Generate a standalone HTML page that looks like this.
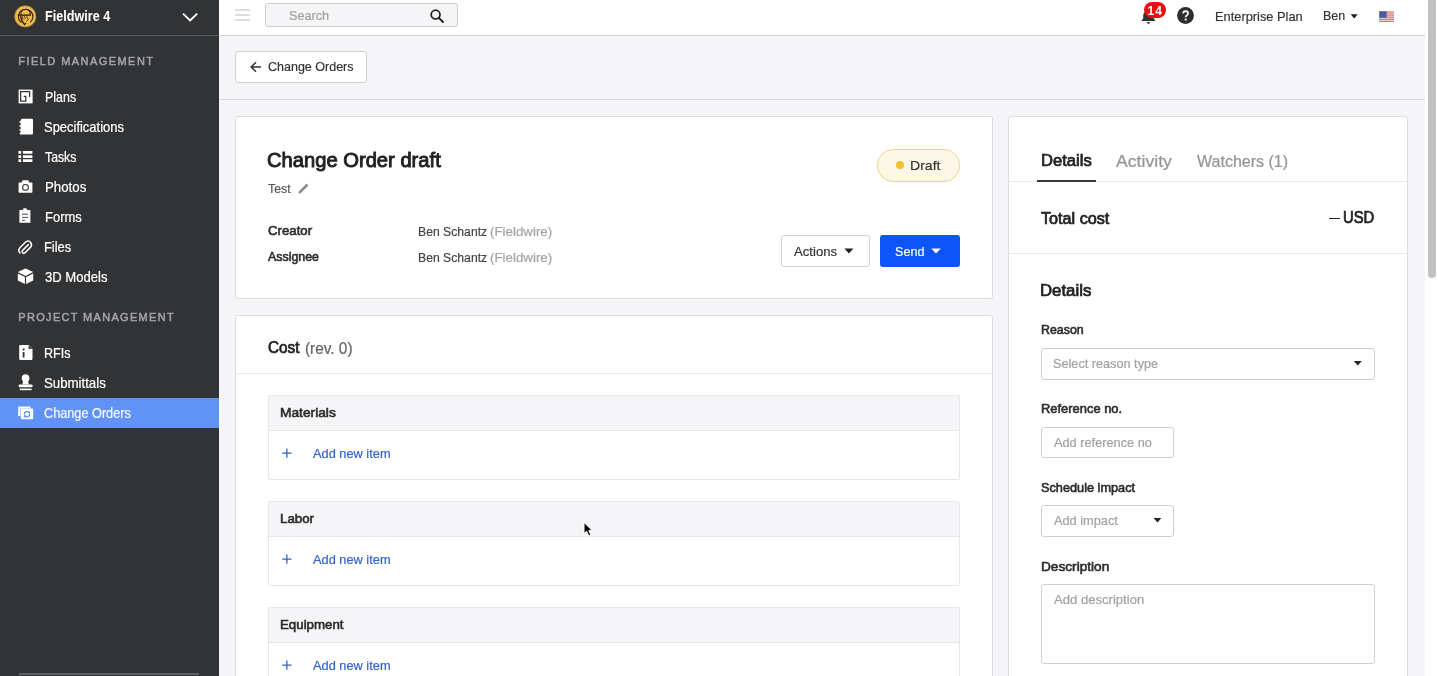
<!DOCTYPE html>
<html><head><meta charset="utf-8">
<style>
*{box-sizing:border-box;margin:0;padding:0}
html,body{width:1438px;height:676px;overflow:hidden;background:#f5f5f7;font-family:"Liberation Sans",sans-serif;position:relative}
.a{position:absolute}
.t{position:absolute;white-space:pre;line-height:normal;font-family:"Liberation Sans",sans-serif}
</style></head>
<body>
<!-- sidebar -->
<div class="a" style="left:0;top:0;width:219px;height:676px;background:#323335"></div>
<div class="a" style="left:0;top:35px;width:219px;height:1px;background:#5b5c5e"></div>
<div class="a" style="left:0;top:398px;width:219px;height:30px;background:#6193f7"></div>
<div class="a" style="left:19px;top:673px;width:180px;height:2px;background:#5e5f61"></div>
<svg class="a" style="left:0;top:0" width="219" height="676" viewBox="0 0 219 676">
  <!-- logo -->
  <circle cx="25.3" cy="16.4" r="10.9" fill="#f2b94c"/>
  <circle cx="25.3" cy="16.4" r="10.6" fill="none" stroke="#3a2c12" stroke-width="0.5" opacity="0.6"/>
  <path d="M21.5 22.6 A7.3 7.3 0 1 1 30.2 22.3" fill="none" stroke="#2b2214" stroke-width="1.1"/>
  <path d="M20.8 14.6 Q21 9.6 25.6 9.4 Q30.2 9.6 30.4 14.6" fill="#f2b94c" stroke="#2b2214" stroke-width="1"/>
  <path d="M17.8 14.4 H31 V15.8 H17.8Z" fill="#2b2214"/>
  <path d="M20.6 15.8 Q20.8 20.5 24.6 24.6 L26 23" fill="none" stroke="#2b2214" stroke-width="1.3"/>
  <path d="M22.2 16.2 L23.2 19.6 M24.6 16.2 L25.2 19.2 M26.8 16.2 L28.2 19.4 L26.4 21.6" fill="none" stroke="#2b2214" stroke-width="0.8"/>
  <!-- chevron -->
  <path d="M183 13.6 L190.1 20.4 L197.2 13.6" fill="none" stroke="#fff" stroke-width="1.9"/>
  <!-- plans -->
  <rect x="18.6" y="89.6" width="14" height="13.8" fill="#fff"/>
  <path d="M29.6 96.6 V91.7 H20.6 V101.2 H25.8 V96.3 H24.2" fill="none" stroke="#323335" stroke-width="1.25" stroke-linecap="round"/>
  <!-- specs -->
  <rect x="21" y="118.8" width="12" height="15.8" rx="1.3" fill="#fff"/>
  <path d="M21.5 120.8 Q18.3 121.8 21.5 123.2 M21.5 124.8 Q18.3 125.8 21.5 127.2 M21.5 128.8 Q18.3 129.8 21.5 131.2 M21.5 132.6 Q18.8 133.4 21.5 134.4" fill="none" stroke="#fff" stroke-width="1.1"/>
  <!-- tasks -->
  <path d="M18.4 151h2.8v2.7h-2.8zM18.4 155.2h2.8v2.7h-2.8zM18.4 159.3h2.8v2.7h-2.8zM22.9 151h9.5v2.7h-9.5zM22.9 155.2h9.5v2.7h-9.5zM22.9 159.3h9.5v2.7h-9.5z" fill="#fff"/>
  <!-- photos -->
  <path d="M18.6 183.3 Q18.6 182.4 19.5 182.4 H21.6 L22.6 180.2 H28.2 L29.2 182.4 H31.5 Q32.4 182.4 32.4 183.3 V192 Q32.4 192.8 31.5 192.8 H19.5 Q18.6 192.8 18.6 192 Z" fill="#fff"/>
  <circle cx="25.5" cy="187.4" r="2.9" fill="none" stroke="#323335" stroke-width="1.1"/>
  <!-- forms -->
  <path d="M19.4 210 H22.8 L23.6 208.2 H26.4 L27.2 210 H30.4 V222.8 H19.4 Z" fill="#fff"/>
  <path d="M22 214.2 H28 M22 217.4 H28 M22 220.3 H25" stroke="#323335" stroke-width="0.9"/>
  <!-- files paperclip -->
  <path d="M28.4 244.6 L22.6 250.4 Q21.4 251.6 22.6 252.8 Q23.8 254 25 252.8 L30.4 247.4 Q32.6 245 30.5 242.2 Q28 239.6 25.4 242.2 L19.9 247.7 Q17.6 250.5 20 253" fill="none" stroke="#fff" stroke-width="1.5" stroke-linecap="round"/>
  <!-- cube -->
  <path d="M25.5 268.4 L33.2 272.1 L25.5 275.9 L17.8 272.1Z" fill="#fff"/>
  <path d="M17.8 273.5 L24.9 277.1 V284 L17.8 280.4Z M33.2 273.5 L26.1 277.1 V284 L33.2 280.4Z" fill="#fff"/>
  <!-- rfi -->
  <path d="M20.4 345 H28.6 L32.5 348.9 V358.8 Q32.5 360 31.3 360 H20.4 Q19.2 360 19.2 358.8 V346.2 Q19.2 345 20.4 345Z" fill="#fff"/>
  <path d="M28.6 345.4 V348.9 H32.1" fill="#323335"/>
  <path d="M22.7 348.6h1.8v1.8h-1.8zM22.7 352h1.8v5.5h-1.8z" fill="#323335"/>
  <!-- stamp -->
  <ellipse cx="25.6" cy="378.2" rx="3.8" ry="3.9" fill="#fff"/>
  <path d="M23.4 380.5 H27.8 L28.8 384.6 H22.4Z" fill="#fff"/>
  <rect x="18.8" y="384.5" width="13.7" height="2.8" rx="0.8" fill="#fff"/>
  <rect x="19.8" y="388.6" width="11.8" height="1.6" fill="#fff"/>
  <!-- change orders -->
  <path d="M18.2 416 V407.6 Q18.2 406.4 19.4 406.4 H29.6 Q30.6 406.4 30.6 407.6 V408.6 H20.4 V416Z" fill="#fff"/>
  <rect x="20.8" y="408.6" width="12.4" height="10.6" rx="0.9" fill="#fff"/>
  <path d="M24.2 414.6 A2.9 2.9 0 0 1 29.2 412.4 M29.8 413.8 A2.9 2.9 0 0 1 24.8 416" fill="none" stroke="#4f7fd8" stroke-width="1.1"/>
  <path d="M29.9 411 V413.2 H27.8Z M24.1 417.4 V415.2 H26.2Z" fill="#4f7fd8"/>
</svg>

<!-- topbar -->
<div class="a" style="left:219px;top:0;width:1206px;height:35px;background:#fff"></div>
<div class="a" style="left:219px;top:35px;width:1206px;height:1px;background:#d4d4d6"></div>
<div class="a" style="left:219px;top:99px;width:1206px;height:1px;background:#dcdcde"></div>
<svg class="a" style="left:230px;top:0" width="30" height="30"><path d="M5 10h15M5 15h15M5 20h15" stroke="#dcdedf" stroke-width="1.8"/></svg>
<div class="a" style="left:265px;top:3px;width:193px;height:24px;background:#f5f5f7;border:1px solid #cdcdcf;border-radius:3px"></div>
<svg class="a" style="left:425px;top:5px" width="24" height="22"><circle cx="10.6" cy="9.6" r="4.4" fill="none" stroke="#1e1e1e" stroke-width="1.7"/><path d="M13.8 12.8 L18 17" stroke="#1e1e1e" stroke-width="1.9" stroke-linecap="round"/></svg>
<svg class="a" style="left:1136px;top:0" width="26" height="28"><path d="M5.3 21 L7.2 18.4 V15.2 Q7.6 11.5 12.4 11 Q17.8 11 17.8 15 V18.4 L19.5 21Z" fill="#2e3236"/><path d="M10.4 22 H14.4 L12.4 24.2Z" fill="#333"/></svg>
<div class="a" style="left:1144px;top:2px;width:21.5px;height:16px;border-radius:8px;background:#ee0c12"></div>
<svg class="a" style="left:1176px;top:6px" width="20" height="20"><circle cx="9.5" cy="9.5" r="8.4" fill="#2c3033"/><path d="M7.2 7.6 Q7.2 5.2 9.6 5.2 Q12 5.2 12 7.4 Q12 8.7 10.6 9.4 Q9.6 9.9 9.6 11.2" fill="none" stroke="#fff" stroke-width="1.7"/><rect x="8.7" y="12.6" width="1.9" height="1.9" fill="#fff"/></svg>
<svg class="a" style="left:1350px;top:14px" width="9" height="6"><path d="M0.7 0.2 H7.7 L4.2 4.4Z" fill="#222"/></svg>
<svg class="a" style="left:1378.6px;top:10.6px" width="15" height="11.6" viewBox="0 0 15 11.6"><rect width="15" height="11.6" rx="1" fill="#f6d6d6"/><path d="M0 1h15M0 2.9h15M0 4.8h15M0 6.7h15M0 8.6h15M0 10.5h15" stroke="#d46a6a" stroke-width="0.9"/><rect x="0.3" y="0.3" width="7.4" height="6.4" fill="#4b62aa"/><path d="M1 1.6h6M1 3.4h6M1 5.2h6" stroke="#2f4390" stroke-width="0.7" stroke-dasharray="1 1"/></svg>

<!-- back button -->
<div class="a" style="left:235px;top:51px;width:132px;height:32px;background:#fff;border:1px solid #cfcfd1;border-radius:3px"></div>
<svg class="a" style="left:248px;top:59px" width="16" height="16"><path d="M13 8 H3.4 M8 3.2 L3.2 8 L8 12.8" fill="none" stroke="#333" stroke-width="1.5"/></svg>

<!-- card 1 -->
<div class="a" style="left:235px;top:116px;width:758px;height:183px;background:#fff;border:1px solid #dcdcde;border-radius:3px"></div>
<svg class="a" style="left:296px;top:181px" width="16" height="16"><path d="M2.4 12.4 L2.8 10.4 L10.6 2.6 L12.4 4.4 L4.6 12.2Z" fill="#8a8a8c"/></svg>
<div class="a" style="left:877px;top:149px;width:83px;height:32.5px;border-radius:16px;background:#fdf8e5;border:1px solid #eed58e"></div>
<div class="a" style="left:896.3px;top:161.3px;width:8px;height:8px;border-radius:50%;background:#f5be2b"></div>
<div class="a" style="left:781px;top:235px;width:89px;height:32px;background:#fff;border:1px solid #d2d2d4;border-radius:3px"></div>
<svg class="a" style="left:844px;top:248px" width="10" height="6"><path d="M0.4 0.4 H9.4 L4.9 5.5Z" fill="#222"/></svg>
<div class="a" style="left:880px;top:235px;width:80px;height:32px;background:#0d55f9;border-radius:3px"></div>
<svg class="a" style="left:931px;top:248px" width="10" height="6"><path d="M0.3 0.4 H9.8 L5 5.5Z" fill="#fff"/></svg>

<!-- card 2 -->
<div class="a" style="left:235px;top:315px;width:758px;height:420px;background:#fff;border:1px solid #dcdcde;border-radius:3px"></div>
<div class="a" style="left:236px;top:373px;width:756px;height:1px;background:#e8e8ea"></div>
<div class="a" style="left:268px;top:395px;width:692px;height:85px;background:#fff;border:1px solid #e7e7e9;border-radius:2px"></div>
<div class="a" style="left:269px;top:396px;width:690px;height:35px;background:#f5f5f7;border-bottom:1px solid #e7e7e9"></div>
<div class="a" style="left:268px;top:501px;width:692px;height:85px;background:#fff;border:1px solid #e7e7e9;border-radius:2px"></div>
<div class="a" style="left:269px;top:502px;width:690px;height:35px;background:#f5f5f7;border-bottom:1px solid #e7e7e9"></div>
<div class="a" style="left:268px;top:607px;width:692px;height:85px;background:#fff;border:1px solid #e7e7e9;border-radius:2px"></div>
<div class="a" style="left:269px;top:608px;width:690px;height:35px;background:#f5f5f7;border-bottom:1px solid #e7e7e9"></div>
<svg class="a" style="left:280px;top:446px" width="14" height="230"><path d="M2.2 7.2 H11.5 M6.85 2.5 V11.8 M2.2 113.2 H11.5 M6.85 108.5 V117.8 M2.2 219.2 H11.5 M6.85 214.5 V223.8" stroke="#3064c8" stroke-width="1.3"/></svg>

<!-- right panel -->
<div class="a" style="left:1008px;top:116px;width:400px;height:620px;background:#fff;border:1px solid #dcdcde;border-radius:3px"></div>
<div class="a" style="left:1009px;top:181px;width:398px;height:1px;background:#e8e8ea"></div>
<div class="a" style="left:1037px;top:180.2px;width:59px;height:1.8px;background:#3a3a3a"></div>
<div class="a" style="left:1009px;top:253px;width:398px;height:1px;background:#e8e8ea"></div>
<div class="a" style="left:1041px;top:348px;width:334px;height:32px;background:#fff;border:1px solid #cfcfd1;border-radius:3px"></div>
<svg class="a" style="left:1353px;top:360px" width="10" height="7"><path d="M0.8 1 H8.8 L4.8 5.6Z" fill="#222"/></svg>
<div class="a" style="left:1041px;top:427px;width:133px;height:31px;background:#fff;border:1px solid #cfcfd1;border-radius:3px"></div>
<div class="a" style="left:1041px;top:505px;width:133px;height:32px;background:#fff;border:1px solid #cfcfd1;border-radius:3px"></div>
<svg class="a" style="left:1153px;top:517px" width="10" height="7"><path d="M0.6 1 H8.4 L4.5 5.6Z" fill="#222"/></svg>
<div class="a" style="left:1041px;top:584px;width:334px;height:80px;background:#fff;border:1px solid #cfcfd1;border-radius:3px"></div>

<!-- scrollbar -->
<div class="a" style="left:1425px;top:0;width:13px;height:676px;background:#fff"></div>
<div class="a" style="left:1428px;top:-2px;width:8px;height:280px;border-radius:4px;background:#c1c1c1"></div>
<div class="a" style="left:1328.6px;top:217.7px;width:11px;height:1.8px;background:#222"></div>

<div style="position:absolute;left:0;top:0;width:1438px;height:676px;will-change:transform">
<div class="t" style="left:45.41px;top:7.93px;font-size:14.1px;font-weight:bold;transform:scaleX(0.8944);transform-origin:0 0;color:#ffffff;">Fieldwire 4</div>
<div class="t" style="left:18.30px;top:55.49px;font-size:10.99px;font-weight:normal;letter-spacing:1.453px;color:#a3a4a6;-webkit-text-stroke:0.49px #a3a4a6;">FIELD MANAGEMENT</div>
<div class="t" style="left:44.62px;top:89.13px;font-size:14.1px;font-weight:normal;transform:scaleX(0.8824);transform-origin:0 0;color:#ffffff;-webkit-text-stroke:0.21px #ffffff;">Plans</div>
<div class="t" style="left:44.08px;top:119.13px;font-size:14.1px;font-weight:normal;transform:scaleX(0.9188);transform-origin:0 0;color:#ffffff;-webkit-text-stroke:0.21px #ffffff;">Specifications</div>
<div class="t" style="left:45.00px;top:149.13px;font-size:14.1px;font-weight:normal;transform:scaleX(0.8714);transform-origin:0 0;color:#ffffff;-webkit-text-stroke:0.21px #ffffff;">Tasks</div>
<div class="t" style="left:44.56px;top:179.13px;font-size:14.1px;font-weight:normal;transform:scaleX(0.9405);transform-origin:0 0;color:#ffffff;-webkit-text-stroke:0.21px #ffffff;">Photos</div>
<div class="t" style="left:44.58px;top:209.13px;font-size:14.1px;font-weight:normal;transform:scaleX(0.9211);transform-origin:0 0;color:#ffffff;-webkit-text-stroke:0.21px #ffffff;">Forms</div>
<div class="t" style="left:43.69px;top:239.13px;font-size:14.1px;font-weight:normal;transform:scaleX(0.9143);transform-origin:0 0;color:#ffffff;-webkit-text-stroke:0.21px #ffffff;">Files</div>
<div class="t" style="left:44.57px;top:269.13px;font-size:14.1px;font-weight:normal;transform:scaleX(0.9273);transform-origin:0 0;color:#ffffff;-webkit-text-stroke:0.21px #ffffff;">3D Models</div>
<div class="t" style="left:18.30px;top:311.49px;font-size:10.99px;font-weight:normal;letter-spacing:1.324px;color:#a3a4a6;-webkit-text-stroke:0.49px #a3a4a6;">PROJECT MANAGEMENT</div>
<div class="t" style="left:44.41px;top:345.03px;font-size:14.1px;font-weight:normal;transform:scaleX(0.8893);transform-origin:0 0;color:#ffffff;-webkit-text-stroke:0.21px #ffffff;">RFIs</div>
<div class="t" style="left:44.36px;top:375.03px;font-size:14.1px;font-weight:normal;transform:scaleX(0.9391);transform-origin:0 0;color:#ffffff;-webkit-text-stroke:0.21px #ffffff;">Submittals</div>
<div class="t" style="left:44.40px;top:405.03px;font-size:14.1px;font-weight:normal;transform:scaleX(0.9011);transform-origin:0 0;color:#f4f8ff;-webkit-text-stroke:0.21px #f4f8ff;">Change Orders</div>
<div class="t" style="left:289.27px;top:8.19px;font-size:13.6px;font-weight:normal;transform:scaleX(0.9317);transform-origin:0 0;color:#a0a0a2;-webkit-text-stroke:0.20px #a0a0a2;">Search</div>
<div class="t" style="left:1147.50px;top:4.02px;font-size:11.94px;font-weight:bold;letter-spacing:1.000px;color:#ffffff;">14</div>
<div class="t" style="left:1215.46px;top:8.89px;font-size:13.6px;font-weight:normal;transform:scaleX(0.9440);transform-origin:0 0;color:#333333;-webkit-text-stroke:0.20px #333333;">Enterprise Plan</div>
<div class="t" style="left:1323.08px;top:7.99px;font-size:13.6px;font-weight:normal;transform:scaleX(0.9174);transform-origin:0 0;color:#333333;-webkit-text-stroke:0.20px #333333;">Ben</div>
<div class="t" style="left:268.40px;top:59.39px;font-size:13.6px;font-weight:normal;transform:scaleX(0.9204);transform-origin:0 0;color:#333333;-webkit-text-stroke:0.20px #333333;">Change Orders</div>
<div class="t" style="left:267.20px;top:148.56px;font-size:20.15px;font-weight:normal;transform:scaleX(1.0012);transform-origin:0 0;color:#222222;-webkit-text-stroke:0.91px #222222;">Change Order draft</div>
<div class="t" style="left:268.20px;top:180.89px;font-size:13.6px;font-weight:normal;transform:scaleX(0.9080);transform-origin:0 0;color:#555555;-webkit-text-stroke:0.20px #555555;">Test</div>
<div class="t" style="left:268.30px;top:223.36px;font-size:13.09px;font-weight:normal;transform:scaleX(1.0114);transform-origin:0 0;color:#2a2a2a;-webkit-text-stroke:0.59px #2a2a2a;">Creator</div>
<div class="t" style="left:268.30px;top:249.46px;font-size:13.09px;font-weight:normal;transform:scaleX(0.9481);transform-origin:0 0;color:#2a2a2a;-webkit-text-stroke:0.59px #2a2a2a;">Assignee</div>
<div class="t" style="left:417.97px;top:224.06px;font-size:13.09px;font-weight:normal;transform:scaleX(0.9329);transform-origin:0 0;color:#444444;-webkit-text-stroke:0.20px #444444;">Ben Schantz</div>
<div class="t" style="left:489.58px;top:224.06px;font-size:13.09px;font-weight:normal;transform:scaleX(1.0186);transform-origin:0 0;color:#a3a3a5;-webkit-text-stroke:0.20px #a3a3a5;">(Fieldwire)</div>
<div class="t" style="left:417.97px;top:250.16px;font-size:13.09px;font-weight:normal;transform:scaleX(0.9329);transform-origin:0 0;color:#444444;-webkit-text-stroke:0.20px #444444;">Ben Schantz</div>
<div class="t" style="left:489.58px;top:250.16px;font-size:13.09px;font-weight:normal;transform:scaleX(1.0186);transform-origin:0 0;color:#a3a3a5;-webkit-text-stroke:0.20px #a3a3a5;">(Fieldwire)</div>
<div class="t" style="left:909.77px;top:157.69px;font-size:13.6px;font-weight:normal;transform:scaleX(1.0345);transform-origin:0 0;color:#333333;-webkit-text-stroke:0.20px #333333;">Draft</div>
<div class="t" style="left:794.30px;top:243.59px;font-size:13.6px;font-weight:normal;transform:scaleX(0.9659);transform-origin:0 0;color:#333333;-webkit-text-stroke:0.20px #333333;">Actions</div>
<div class="t" style="left:894.97px;top:243.59px;font-size:13.6px;font-weight:normal;transform:scaleX(0.9267);transform-origin:0 0;color:#ffffff;-webkit-text-stroke:0.20px #ffffff;">Send</div>
<div class="t" style="left:268.10px;top:338.17px;font-size:16.12px;font-weight:normal;transform:scaleX(0.9471);transform-origin:0 0;color:#222222;-webkit-text-stroke:0.73px #222222;">Cost</div>
<div class="t" style="left:304.65px;top:338.67px;font-size:16.12px;font-weight:normal;transform:scaleX(0.9542);transform-origin:0 0;color:#666666;-webkit-text-stroke:0.24px #666666;">(rev. 0)</div>
<div class="t" style="left:280.45px;top:405.36px;font-size:13.09px;font-weight:normal;transform:scaleX(1.0519);transform-origin:0 0;color:#2a2a2a;-webkit-text-stroke:0.59px #2a2a2a;">Materials</div>
<div class="t" style="left:313.30px;top:445.99px;font-size:13.6px;font-weight:normal;transform:scaleX(0.9415);transform-origin:0 0;color:#3064c8;-webkit-text-stroke:0.20px #3064c8;">Add new item</div>
<div class="t" style="left:280.48px;top:511.36px;font-size:13.09px;font-weight:normal;transform:scaleX(1.0152);transform-origin:0 0;color:#2a2a2a;-webkit-text-stroke:0.59px #2a2a2a;">Labor</div>
<div class="t" style="left:313.30px;top:551.99px;font-size:13.6px;font-weight:normal;transform:scaleX(0.9415);transform-origin:0 0;color:#3064c8;-webkit-text-stroke:0.20px #3064c8;">Add new item</div>
<div class="t" style="left:280.48px;top:617.36px;font-size:13.09px;font-weight:normal;transform:scaleX(1.0161);transform-origin:0 0;color:#2a2a2a;-webkit-text-stroke:0.59px #2a2a2a;">Equipment</div>
<div class="t" style="left:313.30px;top:657.99px;font-size:13.6px;font-weight:normal;transform:scaleX(0.9415);transform-origin:0 0;color:#3064c8;-webkit-text-stroke:0.20px #3064c8;">Add new item</div>
<div class="t" style="left:1040.57px;top:151.47px;font-size:16.12px;font-weight:normal;transform:scaleX(1.0292);transform-origin:0 0;color:#222222;-webkit-text-stroke:0.73px #222222;">Details</div>
<div class="t" style="left:1116.40px;top:151.97px;font-size:16.12px;font-weight:normal;transform:scaleX(1.0961);transform-origin:0 0;color:#959597;-webkit-text-stroke:0.24px #959597;">Activity</div>
<div class="t" style="left:1196.70px;top:151.97px;font-size:16.12px;font-weight:normal;transform:scaleX(0.9945);transform-origin:0 0;color:#959597;-webkit-text-stroke:0.24px #959597;">Watchers (1)</div>
<div class="t" style="left:1041.30px;top:208.97px;font-size:16.12px;font-weight:normal;transform:scaleX(1.0044);transform-origin:0 0;color:#222222;-webkit-text-stroke:0.73px #222222;">Total cost</div>
<div class="t" style="left:1342.88px;top:208.27px;font-size:16.12px;font-weight:normal;transform:scaleX(0.9212);transform-origin:0 0;color:#222222;-webkit-text-stroke:0.73px #222222;">USD</div>
<div class="t" style="left:1040.26px;top:280.77px;font-size:16.12px;font-weight:normal;transform:scaleX(1.0417);transform-origin:0 0;color:#222222;-webkit-text-stroke:0.73px #222222;">Details</div>
<div class="t" style="left:1040.65px;top:322.26px;font-size:13.09px;font-weight:normal;transform:scaleX(0.9477);transform-origin:0 0;color:#2a2a2a;-webkit-text-stroke:0.59px #2a2a2a;">Reason</div>
<div class="t" style="left:1053.37px;top:355.69px;font-size:13.6px;font-weight:normal;transform:scaleX(0.9333);transform-origin:0 0;color:#a0a0a2;-webkit-text-stroke:0.20px #a0a0a2;">Select reason type</div>
<div class="t" style="left:1040.61px;top:401.26px;font-size:13.09px;font-weight:normal;transform:scaleX(0.9875);transform-origin:0 0;color:#2a2a2a;-webkit-text-stroke:0.59px #2a2a2a;">Reference no.</div>
<div class="t" style="left:1054.30px;top:434.89px;font-size:13.6px;font-weight:normal;transform:scaleX(0.9385);transform-origin:0 0;color:#a0a0a2;-webkit-text-stroke:0.20px #a0a0a2;">Add reference no</div>
<div class="t" style="left:1041.20px;top:479.76px;font-size:13.09px;font-weight:normal;transform:scaleX(0.9732);transform-origin:0 0;color:#2a2a2a;-webkit-text-stroke:0.59px #2a2a2a;">Schedule impact</div>
<div class="t" style="left:1054.30px;top:512.69px;font-size:13.6px;font-weight:normal;transform:scaleX(0.9397);transform-origin:0 0;color:#a0a0a2;-webkit-text-stroke:0.20px #a0a0a2;">Add impact</div>
<div class="t" style="left:1040.56px;top:558.76px;font-size:13.09px;font-weight:normal;transform:scaleX(1.0438);transform-origin:0 0;color:#2a2a2a;-webkit-text-stroke:0.59px #2a2a2a;">Description</div>
<div class="t" style="left:1054.20px;top:591.69px;font-size:13.6px;font-weight:normal;transform:scaleX(0.9624);transform-origin:0 0;color:#a0a0a2;-webkit-text-stroke:0.20px #a0a0a2;">Add description</div>
</div>
<svg class="a" style="left:580px;top:519px" width="16" height="22" viewBox="0 0 16 22"><path d="M4 3.4 V14.6 L6.6 12.2 L8.8 17 L10.9 16.1 L8.8 11.6 L12.2 11.6Z" fill="#000" stroke="#fff" stroke-width="1" stroke-linejoin="round"/></svg>
</body></html>
